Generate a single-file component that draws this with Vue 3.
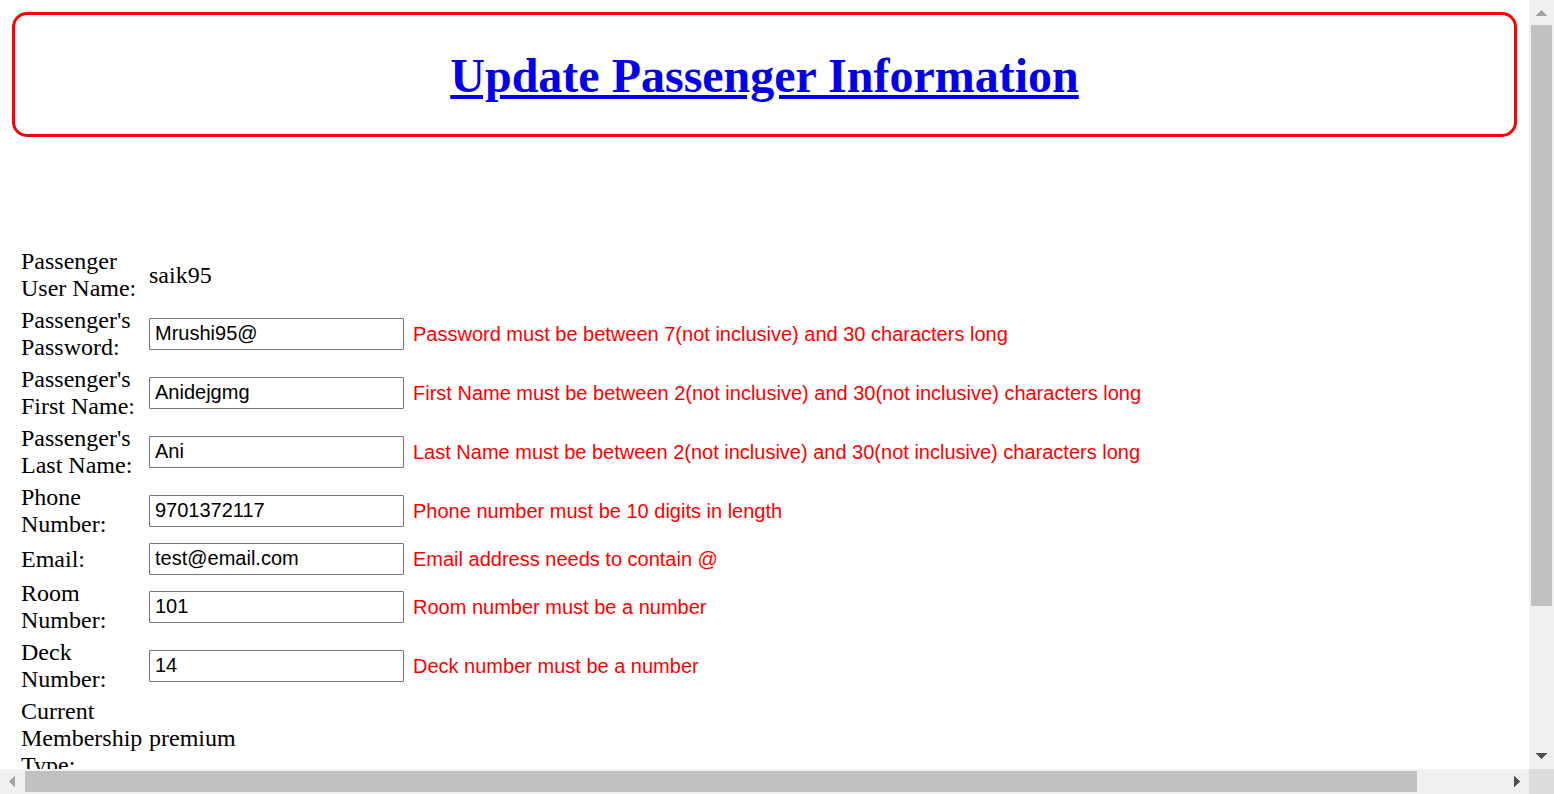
<script setup>
import { reactive } from 'vue'

const fields = reactive([
  { id: 'password', label: "Passenger's Password:", value: 'Mrushi95@', hint: 'Password must be between 7(not inclusive) and 30 characters long' },
  { id: 'first-name', label: "Passenger's First Name:", value: 'Anidejgmg', hint: 'First Name must be between 2(not inclusive) and 30(not inclusive) characters long' },
  { id: 'last-name', label: "Passenger's Last Name:", value: 'Ani', hint: 'Last Name must be between 2(not inclusive) and 30(not inclusive) characters long' },
  { id: 'phone', label: 'Phone Number:', value: '9701372117', hint: 'Phone number must be 10 digits in length' },
  { id: 'email', label: 'Email:', value: 'test@email.com', hint: 'Email address needs to contain @' },
  { id: 'room', label: 'Room Number:', value: '101', hint: 'Room number must be a number' },
  { id: 'deck', label: 'Deck Number:', value: '14', hint: 'Deck number must be a number' }
])
</script>

<template>
  <div class="window">
    <main class="view">
      <header class="banner">
        <h1><a href="#">Update Passenger Information</a></h1>
      </header>
      <form @submit.prevent>
        <table>
          <tbody>
            <tr>
              <td class="name">Passenger User Name:</td>
              <td>saik95</td>
              <td></td>
            </tr>
            <tr v-for="f in fields" :key="f.id">
              <td class="name"><label :for="f.id">{{ f.label }}</label></td>
              <td><input :id="f.id" v-model="f.value" type="text" :aria-describedby="f.id + '-hint'"></td>
              <td class="hint" :id="f.id + '-hint'">{{ f.hint }}</td>
            </tr>
            <tr>
              <td class="name">Current Membership Type:</td>
              <td>premium</td>
              <td></td>
            </tr>
          </tbody>
        </table>
      </form>
    </main>
    <div class="bar vertical">
      <button type="button" aria-label="Scroll up">
        <svg width="25" height="25" viewBox="0 0 25 25" shape-rendering="crispEdges"><path d="M7 16L12.5 10L18 16Z" fill="#a3a3a3" /></svg>
      </button>
      <div class="track"><div class="thumb"></div></div>
      <button type="button" aria-label="Scroll down">
        <svg width="25" height="25" viewBox="0 0 25 25" shape-rendering="crispEdges"><path d="M7 9L18 9L12.5 15Z" fill="#505050" /></svg>
      </button>
    </div>
    <div class="bar horizontal">
      <button type="button" aria-label="Scroll left">
        <svg width="25" height="25" viewBox="0 0 25 25" shape-rendering="crispEdges"><path d="M15 7L9 12.5L15 18Z" fill="#a3a3a3" /></svg>
      </button>
      <div class="track"><div class="thumb"></div></div>
      <button type="button" aria-label="Scroll right">
        <svg width="25" height="25" viewBox="0 0 25 25" shape-rendering="crispEdges"><path d="M10 7L16 12.5L10 18Z" fill="#505050" /></svg>
      </button>
    </div>
    <div class="corner"></div>
  </div>
</template>

<style>
body {
  margin: 0;
  overflow: hidden;
}
</style>

<style scoped>
.window {
  display: grid;
  grid-template: minmax(0, 1fr) 25px / minmax(0, 1fr) 25px;
  height: 100vh;
  background: #fff;
  color: #000;
  font: 24px/27px "Liberation Serif", "Times New Roman", serif;
}
.view {
  overflow: auto;
  scrollbar-width: none;
  padding: 12px;
}
.banner {
  border: 3px solid #f00;
  border-radius: 15px;
  padding: 33px 0 31px;
  text-align: center;
}
h1 {
  margin: 0;
  font-size: 48px;
  line-height: 55px;
}
h1 a {
  color: #00e;
  text-decoration: underline;
}
form {
  padding: 107px 5px 0;
}
table {
  border-collapse: separate;
  border-spacing: 3px;
}
td {
  padding: 1px;
  vertical-align: middle;
}
.name {
  width: 123px;
}
label {
  display: block;
}
input {
  display: block;
  box-sizing: border-box;
  width: 255px;
  height: 32px;
  margin: 0;
  padding: 1px 5px 3px;
  border: 1px solid #767676;
  border-radius: 1px;
  background: #fff;
  color: #000;
  font: 20px "Liberation Sans", Arial, sans-serif;
}
.hint {
  padding-left: 5px;
  color: #f00;
  font: 20px "Liberation Sans", Arial, sans-serif;
  white-space: nowrap;
}
.bar {
  display: flex;
  background: #f0f0f0;
}
.vertical {
  flex-direction: column;
}
.bar button {
  flex: none;
  display: block;
  width: 25px;
  height: 25px;
  padding: 0;
  border: 0;
  background: none;
}
.bar svg {
  display: block;
}
.track {
  flex: 1;
}
.thumb {
  background: #c1c1c1;
}
.vertical .thumb {
  width: 21px;
  height: 80.8%;
  margin: 0 2px;
}
.horizontal .track {
  padding: 2px 0;
}
.horizontal .thumb {
  width: 94.1%;
  height: 21px;
}
.corner {
  background: #dcdcdc;
}
</style>
